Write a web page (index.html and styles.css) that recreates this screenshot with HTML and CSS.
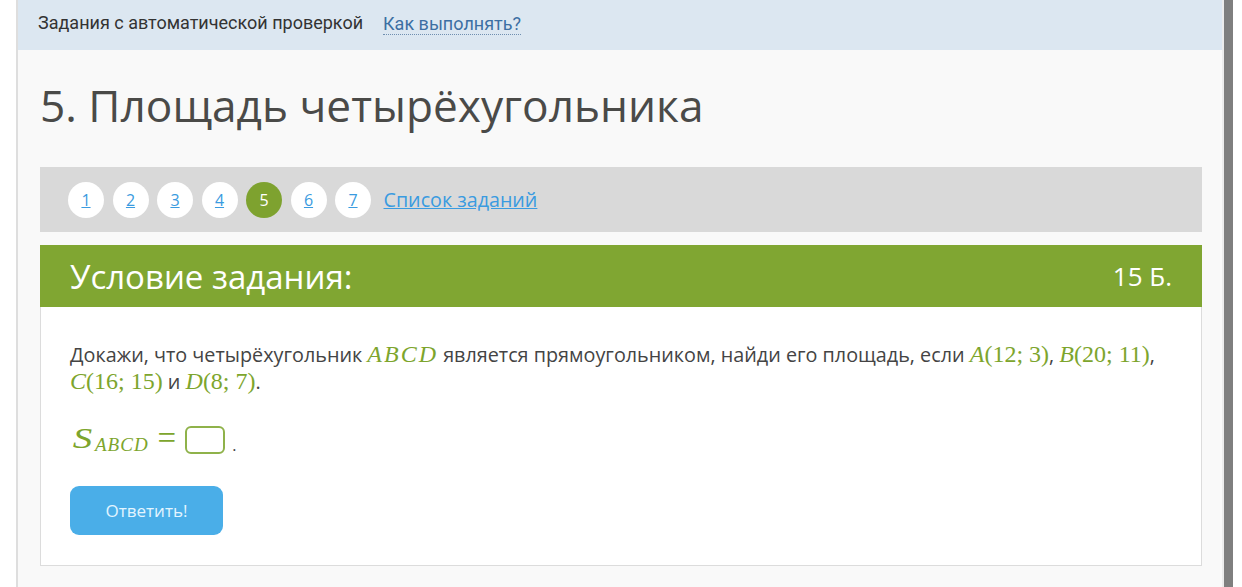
FILE: index.html
```html
<!DOCTYPE html>
<html lang="ru">

<head>
    <meta charset="UTF-8">
    <title>5. Площадь четырёхугольника</title>
    <link rel="stylesheet" href="styles.css">
</head>

<body>
    <div class="layout">
        <div class="page">
            <div class="topbar">
                <span>Задания с автоматической проверкой</span>
                <a class="how-link" href="#">Как выполнять?</a>
            </div>
            <div class="content">
                <h1 class="title">5. Площадь четырёхугольника</h1>
                <div class="task-nav">
                    <a class="task-num" href="#">1</a>
                    <a class="task-num" href="#">2</a>
                    <a class="task-num" href="#">3</a>
                    <a class="task-num" href="#">4</a>
                    <span class="task-num current">5</span>
                    <a class="task-num" href="#">6</a>
                    <a class="task-num" href="#">7</a>
                    <a class="task-list" href="#">Список заданий</a>
                </div>
                <div class="task-head">
                    <span>Условие задания:</span>
                    <span class="points">15 Б.</span>
                </div>
                <div class="task-body">
                    <p class="statement">
                        Докажи, что четырёхугольник <span class="m"><i class="abcd">ABCD</i></span> является прямоугольником, найди его площадь, если
                        <span class="m"><i>A</i>(12;&nbsp;3)</span>, <span class="m"><i>B</i>(20;&nbsp;11)</span>,
                        <span class="m"><i>C</i>(16;&nbsp;15)</span> и <span class="m"><i>D</i>(8;&nbsp;7)</span>.
                    </p>
                    <div class="answer-row">
                        <span class="m big"><i>S</i><sub>ABCD</sub></span>
                        <span class="m eq">=</span>
                        <input class="answer-box" type="text">
                        <span class="dot">.</span>
                    </div>
                    <button class="submit">Ответить!</button>
                </div>
            </div>
        </div>
        <div class="scrollbar"></div>
    </div>
</body>

</html>
```

FILE: styles.css
```css
body {
    margin: 0;
    background: #fff;
    font-family: "Open Sans", sans-serif;
    color: #444;
}

.layout {
    display: flex;
    height: 587px;
    overflow: hidden;
    padding-left: 16px;
}

.page {
    width: 1204px;
    background: #f9f9f9;
    border-left: 2px solid #dedede;
    border-right: 2px solid #ececec;
}

.scrollbar {
    width: 9px;
    background: #7f7f7f;
}

.topbar {
    height: 50px;
    box-sizing: border-box;
    padding: 0 0 6px 20px;
    background: #dce7f1;
    display: flex;
    align-items: center;
    font-family: Roboto, sans-serif;
    font-size: 18px;
    color: #333;
}

.how-link {
    margin-left: 20px;
    color: #3c6fa3;
    text-decoration: none;
    border-bottom: 1px dotted #6f8fb0;
    line-height: 20px;
    margin-top: 4px;
}

.content {
    padding: 0 20px 0 22px;
}

.title {
    margin: 29px 0 36px;
    font-size: 44.2px;
    font-weight: 400;
    line-height: 52px;
    color: #4a4a48;
}

.task-nav {
    height: 65px;
    background: #d9d9d9;
    display: flex;
    align-items: center;
    padding-left: 28px;
    gap: 8.5px;
}

.task-num {
    width: 36px;
    height: 36px;
    border-radius: 50%;
    background: #fff;
    display: flex;
    align-items: center;
    justify-content: center;
    font-size: 16px;
    color: #3a9be0;
}

.task-num.current {
    background: #7ea22f;
    color: #fff;
}

.task-list {
    margin-left: 4px;
    font-size: 19.7px;
    color: #3a9be0;
}

.task-head {
    margin-top: 13px;
    height: 62px;
    background: #80a632;
    color: #fff;
    display: flex;
    align-items: center;
    justify-content: space-between;
    padding: 0 30px;
    font-size: 33px;
}

.task-head .points {
    font-size: 26px;
}

.task-body {
    background: #fff;
    border: 1px solid #dcdcdc;
    border-top: none;
    padding: 34px 29px 30px;
}

.statement {
    margin: 0;
    font-size: 19.8px;
    line-height: 26px;
    color: #444;
}

.m {
    font-family: "Liberation Serif", serif;
    color: #7da52d;
    font-size: 24px;
}

.abcd {
    letter-spacing: 2px;
}

.answer-row {
    display: flex;
    align-items: center;
    margin-top: 27px;
    height: 36px;
}

.m.big {
    font-size: 30px;
    margin-top: -4px;
}

.m.big i {
    display: inline-block;
    transform: scaleX(1.3);
    margin: 0 4px 0 5px;
}

.m.big sub {
    font-size: 19px;
    font-style: italic;
    vertical-align: -3px;
    margin-left: 1px;
    letter-spacing: 1px;
}

.m.eq {
    font-size: 33px;
    margin: -4px 9px 0 9px;
}

.answer-box {
    width: 40px;
    height: 28px;
    box-sizing: border-box;
    border: 2px solid #8fb24a;
    border-radius: 6px;
    padding: 0;
}

.dot {
    margin-left: 7px;
    font-size: 16px;
    margin-top: 10px;
}

.submit {
    margin-top: 28px;
    width: 153px;
    height: 49px;
    border: none;
    border-radius: 9px;
    background: #4aaee8;
    color: #e3f5ff;
    font-family: "Open Sans", sans-serif;
    font-size: 17px;
    cursor: pointer;
}
```
